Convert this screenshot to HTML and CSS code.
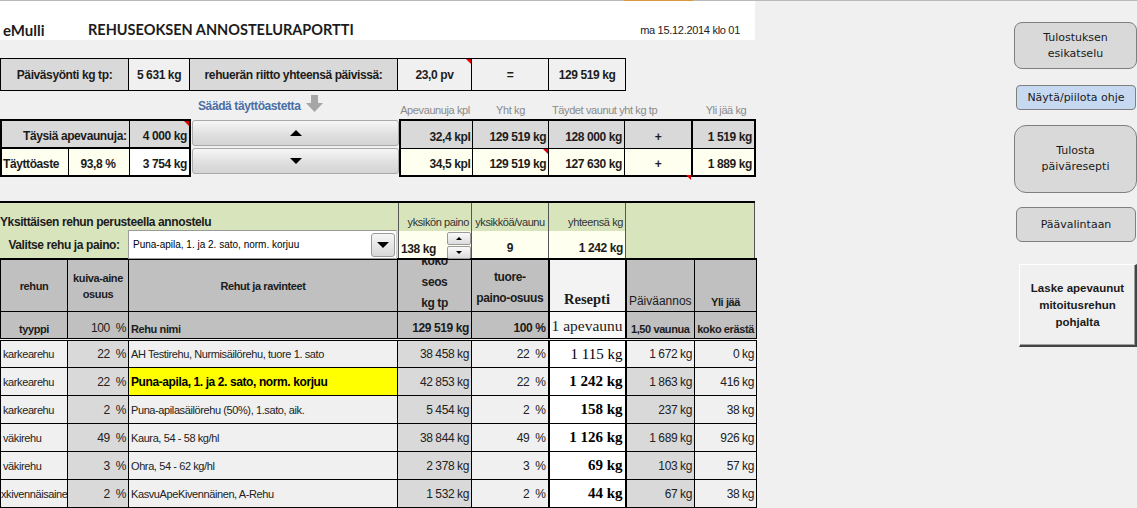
FILE: index.html
```html
<!DOCTYPE html>
<html lang="fi">
<head>
<meta charset="utf-8">
<title>eMulli – Rehuseoksen annosteluraportti</title>
<link rel="stylesheet" href="styles.css">
</head>
<body>
<div class="topline"></div>
<div class="page">
  <main class="sheet">
    <header class="titlebar">
      <span class="brand">eMulli</span>
      <span class="title">REHUSEOKSEN ANNOSTELURAPORTTI</span>
      <span class="date">ma 15.12.2014 klo 01</span>
    </header>

    <table class="sum">
      <colgroup><col class="w128"><col class="w61"><col class="w208"><col class="w74"><col class="w77"><col class="w77"></colgroup>
      <tr>
        <td class="g">Päiväsyönti kg tp:</td>
        <td>5 631 kg</td>
        <td class="g">rehuerän riitto yhteensä päivissä:</td>
        <td class="note">23,0 pv</td>
        <td>=</td>
        <td>129 519 kg</td>
      </tr>
    </table>

    <div class="labels">
      <div class="adjust"><span>Säädä täyttöastetta</span><svg class="darrow" width="18" height="18" viewBox="0 0 18 18"><path d="M5 0h7v8h5l-8.5 9L0 8h5z" fill="#a6a6a6"/></svg></div>
      <span class="lh w74">Apevaunuja kpl</span>
      <span class="lh w77">Yht kg</span>
      <span class="lh w146">Täydet vaunut yht kg tp</span>
      <span class="lh w62">Yli jää kg</span>
    </div>

    <div class="fill">
      <table class="fill-l">
        <colgroup><col class="w67"><col class="w61"><col class="w61"></colgroup>
        <tr>
          <td colspan="2" class="g r">Täysiä apevaunuja:</td>
          <td class="g r note">4 000 kg</td>
        </tr>
        <tr>
          <td class="cream">Täyttöaste</td>
          <td class="cream c">93,8 %</td>
          <td class="white r">3 754 kg</td>
        </tr>
      </table>
      <div class="steppers">
        <button class="step" type="button"><span class="tri up"></span></button>
        <button class="step" type="button"><span class="tri down"></span></button>
      </div>
      <table class="fill-r">
        <colgroup><col class="f1"><col class="f2"><col class="f2"><col class="f3"><col class="f4"></colgroup>
        <tr class="gr">
          <td>32,4 kpl</td><td>129 519 kg</td><td>128 000 kg</td><td class="c">+</td><td class="thick">1 519 kg</td>
        </tr>
        <tr class="cr">
          <td>34,5 kpl</td><td class="note">129 519 kg</td><td>127 630 kg</td><td class="c note-below">+</td><td class="thick">1 889 kg</td>
        </tr>
      </table>
    </div>

    <section class="pick">
      <div class="pick-l">
        <div class="pick-title">Yksittäisen rehun perusteella annostelu</div>
        <div class="pick-row">
          <span class="pick-label">Valitse rehu ja paino:</span>
          <div class="combo">
            <span class="combo-text">Puna-apila, 1. ja 2. sato, norm. korjuu</span>
            <span class="combo-btn"><span class="tri down small"></span></span>
          </div>
        </div>
      </div>
      <table class="pick-r">
        <colgroup><col class="w73"><col class="w77"><col class="w77"><col class="w129"></colgroup>
        <tr class="ph">
          <td class="r">yksikön paino</td><td class="c">yksikköä/vaunu</td><td class="r">yhteensä kg</td><td rowspan="2" class="pg"></td>
        </tr>
        <tr class="pv">
          <td>
            <div class="unit"><b>138 kg</b>
              <span class="spin"><span class="sb"><span class="tri up tiny"></span></span><span class="sb"><span class="tri down tiny"></span></span></span>
            </div>
          </td>
          <td class="c">9</td>
          <td class="r">1 242 kg</td>
        </tr>
      </table>
    </section>

    <table class="grid">
      <colgroup><col class="w67"><col class="w61"><col class="w269"><col class="w74"><col class="w77"><col class="w77"><col class="w69"><col class="w62"></colgroup>
      <thead>
        <tr class="h1">
          <td class="c">rehun</td>
          <td class="c lh16">kuiva-aine<br>osuus</td>
          <td class="c">Rehut ja ravinteet</td>
          <td class="c kokocell"><div class="clip"><div class="clip-in">koko<br>seos<br>kg tp</div></div></td>
          <td class="c topv">tuore-<br>paino-osuus</td>
          <td class="c res botv">Resepti</td>
          <td class="c pa botv">Päiväannos</td>
          <td class="c botv">Yli jää</td>
        </tr>
        <tr class="h2">
          <td class="c">tyyppi</td>
          <td class="r nb">100&nbsp;&nbsp;%</td>
          <td class="l">Rehu nimi</td>
          <td class="r">129 519 kg</td>
          <td class="r">100 %</td>
          <td class="res2">1 apevaunu</td>
          <td class="c small">1,50 vaunua</td>
          <td class="c small">koko erästä</td>
        </tr>
      </thead>
      <tbody>
        <tr>
          <td>karkearehu</td><td class="gcell r">22&nbsp;&nbsp;%</td><td>AH Testirehu, Nurmisäilörehu, tuore 1. sato</td>
          <td class="gcell r">38 458 kg</td><td class="r">22&nbsp;&nbsp;%</td><td class="rcp">1 115 kg</td><td class="r">1 672 kg</td><td class="r">0 kg</td>
        </tr>
        <tr>
          <td>karkearehu</td><td class="gcell r">22&nbsp;&nbsp;%</td><td class="sel">Puna-apila, 1. ja 2. sato, norm. korjuu</td>
          <td class="gcell r">42 853 kg</td><td class="r">22&nbsp;&nbsp;%</td><td class="rcp b">1 242 kg</td><td class="gcell r">1 863 kg</td><td class="r">416 kg</td>
        </tr>
        <tr>
          <td>karkearehu</td><td class="gcell r">2&nbsp;&nbsp;%</td><td>Puna-apilasäilörehu (50%), 1.sato, aik.</td>
          <td class="gcell r">5 454 kg</td><td class="r">2&nbsp;&nbsp;%</td><td class="rcp b">158 kg</td><td class="gcell r">237 kg</td><td class="r">38 kg</td>
        </tr>
        <tr>
          <td>väkirehu</td><td class="gcell r">49&nbsp;&nbsp;%</td><td>Kaura, 54 - 58 kg/hl</td>
          <td class="gcell r">38 844 kg</td><td class="r">49&nbsp;&nbsp;%</td><td class="rcp b">1 126 kg</td><td class="gcell r">1 689 kg</td><td class="r">926 kg</td>
        </tr>
        <tr>
          <td>väkirehu</td><td class="gcell r">3&nbsp;&nbsp;%</td><td>Ohra, 54 - 62 kg/hl</td>
          <td class="gcell r">2 378 kg</td><td class="r">3&nbsp;&nbsp;%</td><td class="rcp b">69 kg</td><td class="gcell r">103 kg</td><td class="r">57 kg</td>
        </tr>
        <tr>
          <td class="clipl">xkivennäisaine</td><td class="gcell r">2&nbsp;&nbsp;%</td><td>KasvuApeKivennäinen, A-Rehu</td>
          <td class="gcell r">1 532 kg</td><td class="r">2&nbsp;&nbsp;%</td><td class="rcp b">44 kg</td><td class="gcell r">67 kg</td><td class="r">38 kg</td>
        </tr>
      </tbody>
    </table>
  </main>

  <aside class="panel">
    <button class="btn b1" type="button">Tulostuksen<br>esikatselu</button>
    <button class="btn b2" type="button">Näytä/piilota ohje</button>
    <button class="btn b3" type="button">Tulosta<br>päiväresepti</button>
    <button class="btn b4" type="button">Päävalintaan</button>
    <button class="btn b5" type="button">Laske apevaunut<br>mitoitusrehun<br>pohjalta</button>
  </aside>
</div>
</body>
</html>
```

FILE: styles.css
```css
* { box-sizing: border-box; }
html, body { margin: 0; padding: 0; }
body {
  width: 1137px;
  height: 508px;
  overflow: hidden;
  background: #f0f0f0;
  color: #1c1c1c;
  font-family: "Liberation Sans", Arial, sans-serif;
  font-size: 11px;
  letter-spacing: -0.4px;
}

.topline {
  height: 1px;
  background: linear-gradient(to right, #b9b9b9 624px, #d99a3c 624px, #d99a3c 693px, #b9b9b9 693px);
}

.page { display: flex; }
.sheet { width: 756px; flex: none; }

/* column widths */
.w61 { width: 61px; } .w62 { width: 62px; } .w67 { width: 67px; } .w69 { width: 69px; }
.w73 { width: 73px; } .w74 { width: 74px; } .w77 { width: 77px; } .w128 { width: 128px; }
.w129 { width: 129px; } .w146 { width: 146px; } .w208 { width: 208px; } .w269 { width: 269px; }
.f1 { width: 72px; } .f2 { width: 75px; } .f3 { width: 67px; } .f4 { width: 62px; }

table { border-collapse: collapse; table-layout: fixed; }
td { padding: 0; white-space: nowrap; }
.c { text-align: center; }
.r { text-align: right; }
.l { text-align: left; }

/* title */
.titlebar {
  width: 755px;
  height: 39px;
  background: #fff;
  display: flex;
  align-items: flex-end;
  padding-bottom: 1px;
  line-height: 18px;
  letter-spacing: 0;
}
.brand {
  font-family: Lato, "Open Sans", sans-serif;
  font-weight: 700;
  font-size: 15px;
  width: 85px;
  margin-left: 3px;
}
.title {
  font-family: Lato, "Open Sans", sans-serif;
  font-weight: 700;
  font-size: 14.5px;
}
.date {
  margin-left: auto;
  margin-right: 15px;
  font-size: 11px;
  letter-spacing: -0.3px;
  color: #222;
}

/* summary row */
.sum { margin-top: 18px; width: 625px; }
.sum td {
  border: 1px solid #000;
  height: 32px;
  text-align: center;
  font-weight: 700;
  font-size: 12px;
  background: #f0f0f0;
}
.sum td.g { background: #d9d9d9; }
td.note, .note-below { position: relative; }
td.note::after {
  content: "";
  position: absolute;
  top: 0; right: 0;
  border-top: 5px solid #e00000;
  border-left: 5px solid transparent;
}
.note-below::after {
  content: "";
  position: absolute;
  top: 100%; right: 0;
  border-top: 5px solid #e00000;
  border-left: 5px solid transparent;
}

/* labels above fill rows */
.labels {
  display: flex;
  height: 28px;
  padding-left: 189px;
  align-items: flex-end;
  padding-bottom: 3px;
  white-space: nowrap;
}
.adjust {
  width: 209px;
  flex: none;
  display: flex;
  align-items: center;
  gap: 6px;
  padding-left: 9px;
  align-self: center;
  margin-top: 5px;
}
.adjust span { color: #4a6ea6; font-weight: 700; font-size: 12px; }
.darrow { display: block; margin-top: -4px; }
.lh { color: #8a8a8a; font-size: 11px; text-align: center; flex: none; }
.lh.w146 { text-align: left; padding-left: 3px; }

/* fill rows */
.fill { display: flex; height: 56px; }
.fill td { height: 28px; font-weight: 700; font-size: 12px; vertical-align: bottom; padding: 0 2px 4px; }
.fill-l { width: 190px; flex: none; border: 2px solid #000; }
.fill-l td { border: 1px solid #000; }
.fill-l tr:first-child td { border-bottom: 2px solid #000; }
.fill-l td.g { background: #d9d9d9; }
.fill-l td.cream { background: #fffff0; padding-left: 1px; }
.fill-l td.white { background: #fff; }

.steppers {
  width: 208px;
  flex: none;
  display: flex;
  flex-direction: column;
  gap: 2px;
  padding: 1px 0 0 1px;
}
.step {
  height: 26px;
  margin: 0;
  border: 1px solid #a9a9a9;
  border-radius: 3px;
  background: linear-gradient(#f6f6f6, #dedede 60%, #d4d4d4);
  display: flex;
  align-items: center;
  justify-content: center;
  padding: 0;
}
.tri { display: block; width: 0; height: 0; border-left: 6px solid transparent; border-right: 6px solid transparent; }
.tri.up { border-bottom: 6px solid #000; }
.tri.down { border-top: 6px solid #000; }
.tri.small { border-left-width: 6px; border-right-width: 6px; }
.tri.tiny { border-left-width: 3px; border-right-width: 3px; }
.tri.up.tiny { border-bottom-width: 3px; }
.tri.down.tiny { border-top-width: 3px; }

.fill-r { width: 357px; flex: none; border: 2px solid #000; }
.fill-r td { border: 1px solid #000; text-align: right; }
.fill-r td.c { text-align: center; }
.fill-r td.thick { border-left: 2px solid #000; }
.fill-r tr.gr td { background: #d9d9d9; }
.fill-r tr.cr td { background: #fffff0; }

/* green pick section */
.pick {
  margin-top: 26px;
  width: 755px;
  height: 57px;
  border-top: 2px solid #000;
  background: #d8e4bc;
  display: flex;
}
.pick-l { width: 398px; flex: none; display: flex; flex-direction: column; }
.pick-title { height: 27px; font-weight: 700; font-size: 12px; display: flex; align-items: flex-end; padding-bottom: 1px; }
.pick-row { display: flex; height: 28px; }
.pick-label { width: 128px; font-weight: 700; font-size: 12px; text-align: center; padding-top: 8px; }
.combo {
  width: 269px;
  height: 29px;
  background: #fff;
  border: 1px solid #9a9a9a;
  border-right-color: #d0d0d0;
  display: flex;
  align-items: center;
  justify-content: space-between;
  padding: 0 1px 0 4px;
}
.combo-text { font-family: "Liberation Sans", Arial, sans-serif; font-size: 10px; letter-spacing: 0; color: #000; }
.combo-btn {
  width: 24px;
  height: 24px;
  border: 1px solid #9a9a9a;
  border-radius: 3px;
  background: linear-gradient(#f6f6f6, #d8d8d8);
  display: flex;
  align-items: center;
  justify-content: center;
}
.pick-r { width: 356px; flex: none; height: 55px; }
.pick-r td { border-left: 1px solid #555; border-right: 1px solid #555; }
.pick-r tr.ph td { height: 28px; vertical-align: bottom; font-size: 11px; color: #333; padding: 0 2px 3px; }
.pick-r tr.pv td { height: 27px; background: #fffff0; font-weight: 700; font-size: 12px; vertical-align: bottom; padding: 0 2px 3px; }
.pick-r td.pg { background: #d8e4bc; }
.pick-r tr.pv td:first-child { padding: 0; vertical-align: top; }
.unit { display: flex; justify-content: space-between; align-items: flex-end; height: 27px; padding-left: 2px; }
.unit b { padding-bottom: 2px; }
.spin { display: flex; flex-direction: column; width: 24px; align-self: flex-start; gap: 1px; padding-top: 1px; }
.sb {
  height: 13px;
  border: 1px solid #9a9a9a;
  border-radius: 2px;
  background: linear-gradient(#fafafa, #dcdcdc);
  display: flex;
  align-items: center;
  justify-content: center;
}

/* main grid */
.grid { width: 756px; border-top: 2px solid #000; }
.grid td { border: 1px solid #000; font-size: 11px; padding: 0 2px; overflow: hidden; }
.grid thead td { background: #c0c0c0; font-weight: 700; }
.grid tr.h1 td { height: 51px; }
.grid tr.h2 td { height: 28px; border-bottom: 3px double #000; vertical-align: bottom; padding-bottom: 3px; }
.grid .lh16 { line-height: 16px; }
.grid td.kokocell { padding: 0; vertical-align: top; }
.clip { height: 51px; overflow: hidden; }
.clip-in { margin-top: -9px; line-height: 21px; font-size: 12px; }
.grid td.topv { vertical-align: top; padding-top: 7px; line-height: 21px; font-size: 12px; }
.grid td.botv { vertical-align: bottom; padding-bottom: 3px; }
.grid thead td.res {
  background: #f3f3f3;
  font-family: "Liberation Serif", "DejaVu Serif", serif;
  font-size: 14.5px;
  letter-spacing: 0;
  border-left: 2px solid #000;
  border-right: 2px solid #000;
}
.grid thead td.res2 {
  background: #f8f8f8;
  font-family: "Liberation Serif", "DejaVu Serif", serif;
  font-weight: 400;
  font-size: 15.5px;
  letter-spacing: 0;
  text-align: center;
  border-left: 2px solid #000;
  border-right: 2px solid #000;
}
.grid thead td.pa { font-weight: 400; font-size: 12px; letter-spacing: 0; }
.grid thead td.small { font-size: 11px; }
.grid thead td.nb { font-weight: 400; font-size: 12px; }
.grid tr.h1 td:nth-child(4), .grid tr.h1 td:nth-child(5) { font-size: 12px; }
.grid tr.h2 td:nth-child(4), .grid tr.h2 td:nth-child(5) { font-size: 12px; }

.grid tbody td { height: 28px; background: #f0f0f0; font-size: 11px; color: #222; }
.grid tbody td.gcell { background: #d9d9d9; }
.grid tbody td:nth-child(2), .grid tbody td:nth-child(4), .grid tbody td:nth-child(5),
.grid tbody td:nth-child(7), .grid tbody td:nth-child(8) { font-size: 12px; }
.grid tbody td.sel { background: #ffff00; font-weight: 700; font-size: 12px; color: #000; }
.grid tbody td.clipl { padding-left: 0; }
.grid tbody td.rcp {
  background: #fff;
  text-align: right;
  font-family: "Liberation Serif", "DejaVu Serif", serif;
  font-size: 15px;
  letter-spacing: 0;
  color: #000;
  border-left: 2px solid #000;
  border-right: 2px solid #000;
}
.grid tbody td.rcp.b { font-weight: 700; }

/* right panel */
.panel {
  margin-left: auto;
  width: 124px;
  flex: none;
  display: flex;
  flex-direction: column;
  align-items: flex-end;
  letter-spacing: 0;
}
.btn {
  margin: 0;
  padding: 0;
  border: 1px solid #7f7f7f;
  background: #d9d9d9;
  color: #1a1a1a;
  font-family: "DejaVu Sans", Verdana, sans-serif;
  font-size: 11px;
  line-height: 16px;
  text-align: center;
}
.b1 { margin-top: 21px; width: 123px; height: 47px; border-radius: 8px; }
.b2 { margin-top: 16px; margin-right: 1px; width: 120px; height: 25px; border-radius: 4px; background: #c6d9f1; }
.b3 { margin-top: 15px; width: 123px; height: 68px; border-radius: 12px; }
.b4 { margin-top: 14px; margin-right: 1px; width: 120px; height: 35px; border-radius: 6px; }
.b5 {
  margin-top: 22px;
  width: 118px;
  height: 83px;
  background: #f0f0f0;
  border: 1px solid #fff;
  border-right: 2px solid #444;
  border-bottom: 2px solid #444;
  box-shadow: inset -1px -1px #a0a0a0;
  font-family: "Liberation Sans", Arial, sans-serif;
  font-weight: 700;
  font-size: 11.5px;
  line-height: 17px;
}
```
